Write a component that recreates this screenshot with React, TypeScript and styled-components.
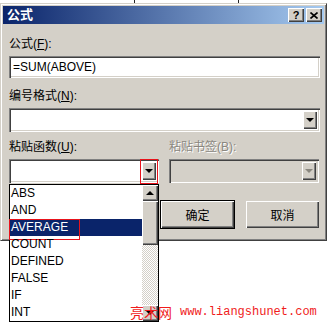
import React from "react";
import styled, { createGlobalStyle } from "styled-components";

const functions = ["ABS", "AND", "AVERAGE", "COUNT", "DEFINED", "FALSE", "IF", "INT"];
const selected = "AVERAGE";

const App: React.FC = () => {
  return (
    <Page>
      <GlobalStyle />
      <TopStrip>
        <Cell $w={135} />
        <Cell $w={104} />
      </TopStrip>
      <Dialog>
        <TitleBar>
          <TitleText>公式</TitleText>
          <CaptionButtons>
            <CapButton>?</CapButton>
            <CapButton>
              <svg width="8" height="7" viewBox="0 0 8 7">
                <path d="M0.5 0.5 L7.5 6.5 M7.5 0.5 L0.5 6.5" stroke="#000" strokeWidth="1.6" />
              </svg>
            </CapButton>
          </CaptionButtons>
        </TitleBar>

        <Body>
          <Label $top={0}>
            公式(<u>F</u>):
          </Label>
          <Field>=SUM(ABOVE)</Field>

          <Label $top={11}>
            编号格式(<u>N</u>):
          </Label>
          <Combo>
            <ComboText />
            <DropButton>
              <Arrow $dir="down" />
            </DropButton>
          </Combo>

          <Columns>
            <Column>
              <Label $top={0}>
                粘贴函数(<u>U</u>):
              </Label>
              <ComboHolder>
                <Combo>
                  <ComboText />
                  <DropButton $marked>
                    <Arrow $dir="down" />
                  </DropButton>
                </Combo>
                <ListBox>
                  <Items>
                    {functions.map((f) => (
                      <Item key={f} $active={f === selected} $marked={f === selected}>
                        {f}
                      </Item>
                    ))}
                  </Items>
                  <ScrollBar>
                    <ScrollButton>
                      <Arrow $dir="up" />
                    </ScrollButton>
                    <Thumb />
                    <Track />
                    <ScrollButton>
                      <Arrow $dir="down" />
                    </ScrollButton>
                  </ScrollBar>
                </ListBox>
              </ComboHolder>
            </Column>
            <Column>
              <Label $top={0} $disabled>
                粘贴书签(B):
              </Label>
              <Combo $disabled>
                <ComboText />
                <DropButton>
                  <Arrow $dir="down" $disabled />
                </DropButton>
              </Combo>
            </Column>
          </Columns>

          <ButtonRow>
            <PushButton $default>确定</PushButton>
            <PushButton>取消</PushButton>
          </ButtonRow>
        </Body>
      </Dialog>

      <Watermark>
        <WatermarkCn>亮术网</WatermarkCn>
        <WatermarkUrl>www.liangshunet.com</WatermarkUrl>
      </Watermark>
    </Page>
  );
};

export default App;

const GlobalStyle = createGlobalStyle`
  html, body {
    margin: 0;
    padding: 0;
    background: #fff;
  }
  body {
    font-family: "Liberation Sans", "Noto Sans CJK SC", sans-serif;
    font-size: 12px;
    color: #000;
  }
`;

const Page = styled.div`
  position: relative;
  width: 330px;
  height: 335px;
  overflow: hidden;
  background: #fff;
`;

const TopStrip = styled.div`
  display: flex;
  height: 3px;
`;

const Cell = styled.div<{ $w: number }>`
  width: ${(p) => p.$w}px;
  border-right: 1px solid #222;
  box-sizing: border-box;
`;

const Dialog = styled.div`
  width: 327px;
  box-sizing: border-box;
  background: #d4d0c8;
  border: 1px solid;
  border-color: #d4d0c8 #404040 #404040 #d4d0c8;
  box-shadow: inset 1px 1px #fff, inset -1px -1px #808080;
  padding: 2px;
`;

const TitleBar = styled.div`
  height: 18px;
  display: flex;
  align-items: center;
  justify-content: space-between;
  padding: 0 2px 0 4px;
  background: linear-gradient(to right, #0a246a, #a6caf0);
`;

const TitleText = styled.span`
  color: #fff;
  font-weight: bold;
  font-size: 13px;
  line-height: 18px;
`;

const CaptionButtons = styled.div`
  display: flex;
  gap: 2px;
`;

const raised = `
  background: #d4d0c8;
  box-shadow: inset 1px 1px #fff, inset -1px -1px #404040, inset -2px -2px #808080;
`;

const CapButton = styled.div`
  ${raised}
  width: 16px;
  height: 14px;
  display: flex;
  align-items: center;
  justify-content: center;
  font-weight: bold;
  font-size: 11px;
  line-height: 14px;
  color: #000;
`;

const Body = styled.div`
  display: flex;
  flex-direction: column;
  padding: 13px 4px 9px 6px;
`;

const Label = styled.div<{ $top: number; $disabled?: boolean }>`
  margin-top: ${(p) => p.$top}px;
  margin-bottom: 5px;
  height: 14px;
  line-height: 14px;
  font-size: 12px;
  color: ${(p) => (p.$disabled ? "#8a877f" : "#000")};
  text-shadow: ${(p) => (p.$disabled ? "1px 1px #fff" : "none")};
  white-space: nowrap;
`;

const sunken = `
  box-shadow: inset 1px 1px #808080, inset 2px 2px #404040, inset -1px -1px #fff, inset -2px -2px #d4d0c8;
`;

const Field = styled.div`
  ${sunken}
  height: 22px;
  background: #fff;
  display: flex;
  align-items: center;
  padding-left: 4px;
  font-size: 12px;
`;

const Combo = styled.div<{ $disabled?: boolean }>`
  ${sunken}
  height: 24px;
  box-sizing: border-box;
  padding: 3px;
  display: flex;
  background: ${(p) => (p.$disabled ? "#d4d0c8" : "#fff")};
`;

const ComboText = styled.div`
  flex: 1;
`;

const DropButton = styled.div<{ $marked?: boolean }>`
  ${raised}
  position: relative;
  width: 14px;
  display: flex;
  align-items: center;
  justify-content: center;

  &::after {
    content: "";
    display: ${(p) => (p.$marked ? "block" : "none")};
    position: absolute;
    left: -2px;
    top: -3px;
    right: -2px;
    bottom: -4px;
    border: 1px solid #e8131b;
  }
`;

const Arrow = styled.div<{ $dir: "up" | "down"; $disabled?: boolean }>`
  width: 0;
  height: 0;
  border-left: 4px solid transparent;
  border-right: 4px solid transparent;
  ${(p) =>
    p.$dir === "down"
      ? `border-top: 4px solid ${p.$disabled ? "#8a877f" : "#000"};`
      : `border-bottom: 4px solid ${p.$disabled ? "#8a877f" : "#000"};`}
`;

const Columns = styled.div`
  display: grid;
  grid-template-columns: 150px 150px;
  column-gap: 10px;
  margin-top: 8px;
`;

const Column = styled.div`
  display: flex;
  flex-direction: column;
`;

const ComboHolder = styled.div`
  position: relative;
`;

const ListBox = styled.div`
  position: absolute;
  top: calc(100% + 1px);
  left: 0;
  width: 150px;
  height: 138px;
  box-sizing: border-box;
  border: 1px solid #000;
  background: #fff;
  display: flex;
  z-index: 2;
`;

const Items = styled.div`
  flex: 1;
  display: flex;
  flex-direction: column;
`;

const Item = styled.div<{ $active?: boolean; $marked?: boolean }>`
  position: relative;
  height: 17px;
  line-height: 17px;
  padding-left: 1px;
  font-size: 12px;
  background: ${(p) => (p.$active ? "#0a246a" : "transparent")};
  color: ${(p) => (p.$active ? "#fff" : "#000")};

  &::after {
    content: "";
    display: ${(p) => (p.$marked ? "block" : "none")};
    position: absolute;
    left: -1px;
    top: 0;
    width: 71px;
    height: 21px;
    box-sizing: border-box;
    border: 1px solid #e8131b;
  }
`;

const ScrollBar = styled.div`
  width: 16px;
  display: flex;
  flex-direction: column;
`;

const ScrollButton = styled.div`
  ${raised}
  height: 16px;
  display: flex;
  align-items: center;
  justify-content: center;
`;

const Thumb = styled.div`
  ${raised}
  height: 44px;
`;

const Track = styled.div`
  flex: 1;
  background: repeating-conic-gradient(#d4d0c8 0 25%, #fff 0 50%) 0 0 / 2px 2px;
`;

const ButtonRow = styled.div`
  display: flex;
  justify-content: flex-end;
  gap: 10px;
  margin-top: 17px;
`;

const PushButton = styled.div<{ $default?: boolean }>`
  width: 75px;
  height: 29px;
  box-sizing: border-box;
  display: flex;
  align-items: center;
  justify-content: center;
  font-size: 12px;
  background: #d4d0c8;
  border: 1px solid ${(p) => (p.$default ? "#000" : "#d4d0c8")};
  box-shadow: inset 1px 1px #fff, inset -1px -1px #404040, inset -2px -2px #808080;
`;

const Watermark = styled.div`
  position: absolute;
  left: 130px;
  top: 303px;
  display: flex;
  align-items: center;
  gap: 8px;
  color: #f01c1c;
  z-index: 3;
`;

const WatermarkCn = styled.span`
  font-family: "Noto Sans CJK SC", sans-serif;
  font-size: 14px;
  line-height: 18px;
`;

const WatermarkUrl = styled.span`
  font-family: "Liberation Mono", monospace;
  font-size: 12px;
  line-height: 18px;
`;
